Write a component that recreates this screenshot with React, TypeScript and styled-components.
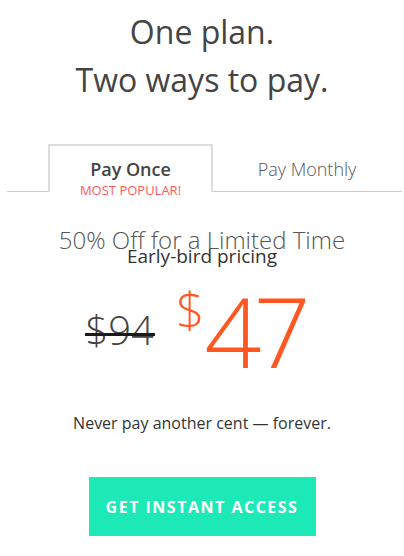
import React from "react";
import styled, { createGlobalStyle } from "styled-components";

const Global = createGlobalStyle`
  html, body { margin: 0; padding: 0; background: #fff; }
  body { font-family: "Open Sans", "Liberation Sans", sans-serif; color: #444; }
  * { box-sizing: border-box; }
`;

const Page = styled.div`
  width: 404px;
  display: flex;
  flex-direction: column;
  align-items: center;
  padding-top: 8px;
`;

const Title = styled.h1`
  margin: 0;
  font-size: 32px;
  font-weight: 400;
  line-height: 48px;
  color: #444;
  text-align: center;
`;

const TabBar = styled.div`
  align-self: stretch;
  margin: 40px 2px 0 7px;
  padding-left: 41px;
  height: 48px;
  display: flex;
  align-items: flex-start;
  border-bottom: 1px solid #ccc;
`;

const Tab = styled.div<{ $active?: boolean }>`
  width: ${(p) => (p.$active ? "165px" : "188px")};
  height: ${(p) => (p.$active ? "48px" : "47px")};
  background: #fff;
  border: 2px solid ${(p) => (p.$active ? "#ddd" : "transparent")};
  border-bottom: none;
  display: flex;
  flex-direction: column;
  align-items: center;
  padding-top: 13px;
`;

const TabName = styled.div<{ $active?: boolean }>`
  font-size: 18px;
  line-height: 20px;
  font-weight: ${(p) => (p.$active ? 600 : 300)};
  color: ${(p) => (p.$active ? "#444" : "#555")};
  white-space: nowrap;
`;

const Badge = styled.div`
  margin-top: 4px;
  font-size: 13px;
  line-height: 14px;
  color: #ff5a5a;
  white-space: nowrap;
`;

const Offer = styled.div`
  margin-top: 33px;
  font-size: 24px;
  font-weight: 300;
  line-height: 30px;
  color: #555;
`;

const Sub = styled.div`
  margin-top: -9px;
  font-size: 19px;
  line-height: 20px;
  color: #333;
`;

const PriceRow = styled.div`
  margin-top: 15px;
  height: 87px;
  padding-right: 16px;
  overflow: hidden;
  display: flex;
  align-items: flex-start;
  justify-content: center;
`;

const OldPrice = styled.span`
  margin-top: 29px;
  font-size: 40px;
  font-weight: 300;
  line-height: 40px;
  color: #444;
  position: relative;
  &::after {
    content: "";
    position: absolute;
    left: -1px;
    right: -1px;
    top: 23px;
    height: 3px;
    background: #1a1a1a;
  }
`;

const Currency = styled.span`
  margin-left: 22px;
  margin-top: 3px;
  font-size: 50px;
  font-weight: 300;
  line-height: 50px;
  color: #ff5722;
`;

const Amount = styled.span`
  margin-left: 0;
  font-size: 100px;
  font-weight: 300;
  line-height: 100px;
  letter-spacing: -8px;
  color: #ff5722;
`;

const Tagline = styled.p`
  margin: 44px 0 0;
  font-size: 16px;
  line-height: 22px;
  color: #333;
`;

const Button = styled.button`
  margin-top: 43px;
  width: 227px;
  height: 59px;
  border: none;
  background: #1de9b6;
  color: #fff;
  font-family: "Open Sans", "Liberation Sans", sans-serif;
  font-size: 16px;
  font-weight: 700;
  letter-spacing: 1.5px;
  cursor: pointer;
`;

export default function App() {
  return (
    <>
      <Global />
      <Page>
        <Title>
          One plan.
          <br />
          Two ways to pay.
        </Title>
        <TabBar>
          <Tab $active>
            <TabName $active>Pay Once</TabName>
            <Badge>MOST POPULAR!</Badge>
          </Tab>
          <Tab>
            <TabName>Pay Monthly</TabName>
          </Tab>
        </TabBar>
        <Offer>50% Off for a Limited Time</Offer>
        <Sub>Early-bird pricing</Sub>
        <PriceRow>
          <OldPrice>$94</OldPrice>
          <Currency>$</Currency>
          <Amount>47</Amount>
        </PriceRow>
        <Tagline>Never pay another cent — forever.</Tagline>
        <Button>GET INSTANT ACCESS</Button>
      </Page>
    </>
  );
}
